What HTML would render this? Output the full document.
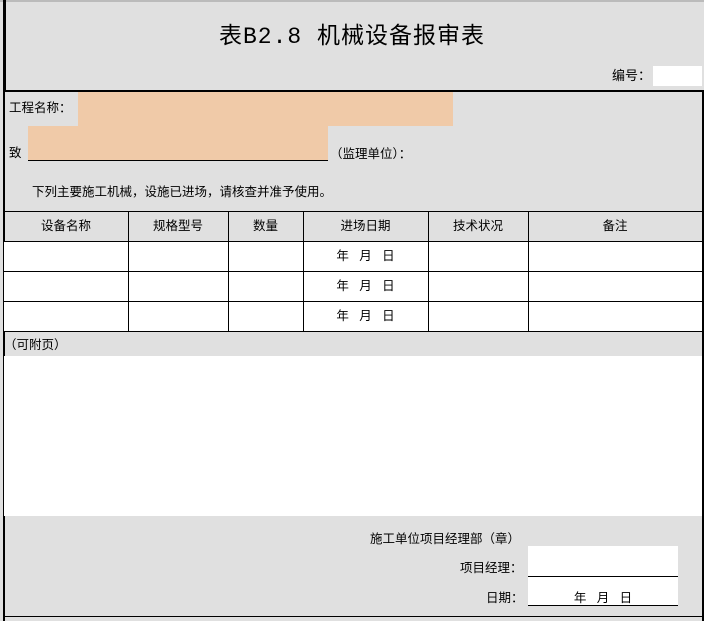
<!DOCTYPE html>
<html><head><meta charset="utf-8"><style>
*{margin:0;padding:0;box-sizing:border-box}
body{width:704px;height:621px;background:#e0e0e0;position:relative;overflow:hidden;font-family:"Liberation Sans","Noto Sans CJK SC",sans-serif;font-size:12.5px;color:#000}
.a{position:absolute}
.t{position:absolute;white-space:nowrap;line-height:1}
.h{position:absolute;background:#000}
</style></head><body>
<div class="a" style="left:0;top:0;width:704px;height:2px;background:#bbb"></div>
<div class="h" style="left:3px;top:0;width:3px;height:91px"></div>
<div class="t" style="left:0;width:704px;top:24px;text-align:center;font-size:23px;letter-spacing:1px"><span style="font-family:'Liberation Mono','Noto Sans CJK SC',monospace">表B2.8 </span>机械设备报审表</div>
<div class="t" style="left:612px;top:69px;font-size:13px">编号：</div>
<div class="a" style="left:653px;top:66px;width:49px;height:20px;background:#fff"></div>
<div class="h" style="left:3px;top:90px;width:701px;height:2px"></div>
<div class="h" style="left:3px;top:90px;width:2px;height:531px"></div>
<div class="h" style="left:702px;top:90px;width:2px;height:531px"></div>
<div class="t" style="left:9px;top:102px">工程名称：</div>
<div class="a" style="left:78px;top:92px;width:375px;height:34px;background:#f0caa8"></div>
<div class="a" style="left:28px;top:126px;width:300px;height:35px;background:#f0caa8;border-bottom:1px solid #000"></div>
<div class="t" style="left:9px;top:147px">致</div>
<div class="t" style="left:330px;top:147px;font-family:'Noto Sans CJK SC',sans-serif">（监理单位）：</div>
<div class="t" style="left:32px;top:186px">下列主要施工机械，设施已进场，请核查并准予使用。</div>
<div class="a" style="left:4px;top:241px;width:698px;height:90px;background:#fff"></div>
<div class="h" style="left:4px;top:211px;width:698px;height:1px"></div>
<div class="h" style="left:4px;top:241px;width:698px;height:1px"></div>
<div class="h" style="left:4px;top:271px;width:698px;height:1px"></div>
<div class="h" style="left:4px;top:301px;width:698px;height:1px"></div>
<div class="h" style="left:4px;top:331px;width:698px;height:1px"></div>
<div class="h" style="left:128px;top:211px;width:1px;height:120px"></div>
<div class="h" style="left:228px;top:211px;width:1px;height:120px"></div>
<div class="h" style="left:303px;top:211px;width:1px;height:120px"></div>
<div class="h" style="left:428px;top:211px;width:1px;height:120px"></div>
<div class="h" style="left:528px;top:211px;width:1px;height:120px"></div>
<div class="t" style="left:4px;width:124px;top:220px;text-align:center">设备名称</div>
<div class="t" style="left:128px;width:100px;top:220px;text-align:center">规格型号</div>
<div class="t" style="left:228px;width:75px;top:220px;text-align:center">数量</div>
<div class="t" style="left:303px;width:125px;top:220px;text-align:center">进场日期</div>
<div class="t" style="left:428px;width:100px;top:220px;text-align:center">技术状况</div>
<div class="t" style="left:528px;width:174px;top:220px;text-align:center">备注</div>
<div class="t" style="left:303px;width:125px;top:250px;text-align:center">年 &nbsp; 月 &nbsp; 日</div>
<div class="t" style="left:303px;width:125px;top:280px;text-align:center">年 &nbsp; 月 &nbsp; 日</div>
<div class="t" style="left:303px;width:125px;top:310px;text-align:center">年 &nbsp; 月 &nbsp; 日</div>
<div class="t" style="left:4px;top:338px;font-family:'Noto Sans CJK SC',sans-serif">（可附页）</div>
<div class="a" style="left:4px;top:356px;width:698px;height:160px;background:#fff"></div>
<div class="t" style="left:370px;top:532px;font-family:'Noto Sans CJK SC',sans-serif">施工单位项目经理部（章）</div>
<div class="a" style="left:528px;top:546px;width:150px;height:60px;background:#fff"></div>
<div class="h" style="left:528px;top:576px;width:150px;height:1px"></div>
<div class="h" style="left:528px;top:605px;width:150px;height:1px"></div>
<div class="t" style="left:460px;top:562px">项目经理：</div>
<div class="t" style="left:486px;top:592px">日期：</div>
<div class="t" style="left:528px;width:150px;top:592px;text-align:center">年 &nbsp; 月 &nbsp; 日</div>
<div class="h" style="left:4px;top:616px;width:698px;height:1px"></div>
</body></html>
